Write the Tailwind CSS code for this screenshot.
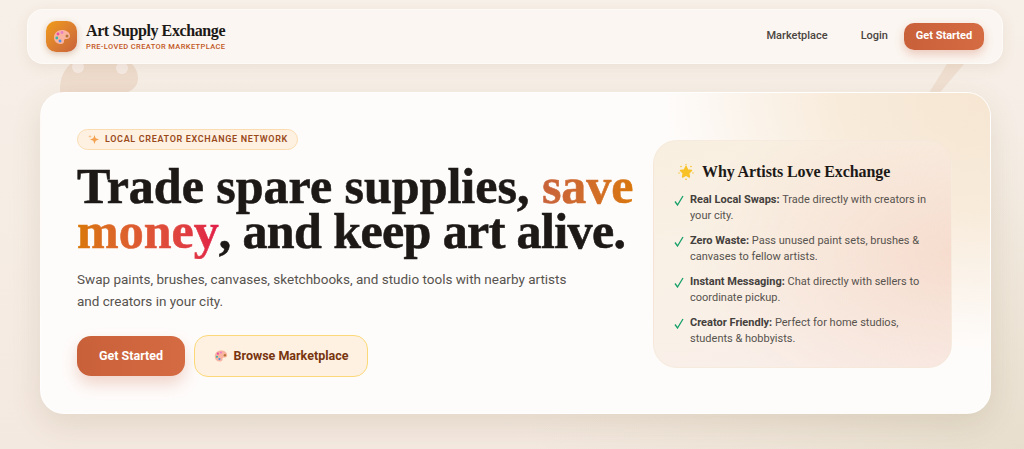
<!DOCTYPE html>
<html lang="en">
<head>
    <meta charset="UTF-8">
    <meta name="viewport" content="width=device-width, initial-scale=1.0">
    <title>Art Supply Exchange</title>
    <script src="https://cdn.jsdelivr.net/npm/@tailwindcss/browser@4"></script>
</head>
<body class="relative h-[449px] overflow-hidden bg-[radial-gradient(ellipse_500px_320px_at_100%_100%,rgba(226,218,198,0.7),transparent),linear-gradient(180deg,#f7f0e8,#f4e9e0)] font-['Roboto',sans-serif] text-[#1c1917]">
    <!-- background watermarks -->
    <svg class="absolute left-[58px] top-[50px]" width="84" height="60" viewBox="0 0 84 60" aria-hidden="true">
        <path d="M2 40C2 14 22 4 42 4s38 8 38 24c0 12-12 16-24 18-10 2-10 14-24 14C14 60 2 54 2 40Z" fill="#eedccd"/>
        <circle cx="20" cy="17" r="6" fill="#f6ece6"/>
        <circle cx="64" cy="18" r="6" fill="#f6ece6"/>
    </svg>
    <svg class="absolute left-[920px] top-[60px]" width="50" height="36" viewBox="0 0 50 36" aria-hidden="true">
        <path d="M27 4h17L17 36H7Z" fill="#f0e0d2"/>
    </svg>

    <header class="relative ml-[27px] mr-[21px] mt-[9px] flex h-[55px] items-center justify-between rounded-2xl border border-white/50 bg-[#fbf6f1] pl-[18px] pr-[18px] shadow-[0_4px_14px_rgba(150,100,60,0.10)]">
        <div class="flex items-center gap-[9px]">
            <div class="flex size-[31px] items-center justify-center rounded-[10px] bg-linear-to-br from-[#f09c12] to-[#c8623a] shadow-[0_2px_6px_rgba(150,80,30,0.3)]">
                <svg width="18" height="18" viewBox="0 0 18 18" aria-hidden="true">
                    <path d="M1 9.500C1 5 4.500 2 9 2s8 2.500 8 6c0 2.500-2.500 3-4.500 3-1.500 0-1.500 1.500-1.500 2.500S10 16 8 16C4 16 1 13.500 1 9.500Z" fill="#f9b3a0"/>
                    <circle cx="5" cy="6" r="1.400" fill="#e84fa0"/>
                    <circle cx="9" cy="4.500" r="1.400" fill="#e87fc8"/>
                    <circle cx="3.800" cy="10" r="1.400" fill="#35b5a5"/>
                    <circle cx="7" cy="13" r="1.400" fill="#4a90e8"/>
                    <circle cx="14" cy="8" r="1.500" fill="#b5763a"/>
                </svg>
            </div>
            <div>
                <div class="font-['Liberation_Serif',serif] text-[16px] font-bold leading-[20px] tracking-[-0.4px] text-[#1c1917]">Art Supply Exchange</div>
                <div class="text-[7.500px] font-medium leading-[11px] tracking-[0.05em] text-[#c2571f]">PRE-LOVED CREATOR MARKETPLACE</div>
            </div>
        </div>
        <nav class="flex items-center">
            <a class="mr-[33px] text-[11px] font-medium text-[#4a4440]" href="#">Marketplace</a>
            <a class="mr-[16px] text-[11px] font-medium text-[#4a4440]" href="#">Login</a>
            <a class="flex h-[27px] w-[80px] items-center justify-center rounded-[10px] bg-linear-to-r from-[#c8603a] to-[#d56b42] text-[11px] font-bold text-white shadow-[0_4px_10px_rgba(200,96,58,0.3)]" href="#">Get Started</a>
        </nav>
    </header>

    <main class="relative ml-[40px] mr-[33px] mt-[28px] flex h-[322px] justify-between rounded-3xl border border-white/80 bg-[#fefcfb] bg-[radial-gradient(ellipse_330px_260px_at_100%_0%,#f6e6d2_0%,#f8ebda_45%,#fefcfb_100%)] pl-[36px] pr-[38px] pt-[36px] shadow-[0_10px_30px_rgba(120,90,50,0.14)]">
        <section class="w-[570px]">
            <div class="flex h-[21px] w-[221px] items-center gap-[6px] rounded-full border border-[#fbdcb0] bg-[#fef1e2] pl-[10px]">
                <svg width="11" height="11" viewBox="0 0 11 11" aria-hidden="true">
                    <path d="M6.500 1 7.700 4.300 11 5.500 7.700 6.700 6.500 10 5.300 6.700 2 5.500 5.300 4.300Z" fill="#f5a04f"/>
                    <path d="M2 0.500 2.500 2 4 2.500 2.500 3 2 4.500 1.500 3 0 2.500 1.500 2Z" fill="#f9c58c"/>
                </svg>
                <span class="whitespace-nowrap text-[9px] font-semibold tracking-[0.074em] text-[#9a4a1a]">LOCAL CREATOR EXCHANGE NETWORK</span>
            </div>
            <h1 class="mt-[14px] font-['Liberation_Serif',serif] text-[50px] font-bold leading-[45px] text-[#1c1917] [-webkit-text-stroke:0.6px_#1c1917]">
                Trade spare supplies, <span class="bg-linear-to-r from-[#c8623a] via-[#d97706] via-40% to-[#e11d48] bg-clip-text text-transparent [-webkit-text-stroke:0.6px_transparent]">save money</span><span class="tracking-[-0.6px]">, and keep art alive.</span>
            </h1>
            <p class="mt-[14px] text-[13.500px] leading-[22px] text-[#57534e]">Swap paints, brushes, canvases, sketchbooks, and studio tools with nearby artists<br>and creators in your city.</p>
            <div class="mt-[23px] flex items-center gap-[9px]">
                <a class="flex h-[40px] w-[108px] items-center justify-center rounded-[14px] bg-linear-to-r from-[#c8603a] to-[#d56b42] text-[12.500px] font-bold text-white shadow-[0_8px_16px_rgba(200,96,58,0.25)]" href="#">Get Started</a>
                <a class="flex h-[42px] w-[174px] items-center justify-center gap-[6px] rounded-[14px] border border-[#fcd978] bg-[#fef1e2] text-[12.500px] font-bold text-[#78350f]" href="#">
                    <svg width="14" height="14" viewBox="0 0 18 18" aria-hidden="true">
                        <path d="M1 9.500C1 5 4.500 2 9 2s8 2.500 8 6c0 2.500-2.500 3-4.500 3-1.500 0-1.500 1.500-1.500 2.500S10 16 8 16C4 16 1 13.500 1 9.500Z" fill="#f9b3a0"/>
                        <circle cx="5" cy="6" r="1.400" fill="#e84fa0"/>
                        <circle cx="9" cy="4.500" r="1.400" fill="#e87fc8"/>
                        <circle cx="3.800" cy="10" r="1.400" fill="#35b5a5"/>
                        <circle cx="7" cy="13" r="1.400" fill="#4a90e8"/>
                        <circle cx="14" cy="8" r="1.500" fill="#b5763a"/>
                    </svg>
                    Browse Marketplace
                </a>
            </div>
        </section>

        <aside class="mt-[11px] h-[228px] w-[299px] rounded-3xl border border-[#f5e7d8]/60 bg-[radial-gradient(ellipse_260px_170px_at_100%_50%,rgba(245,214,198,0.75),transparent),linear-gradient(165deg,#f8efe0,#f9f1e6_45%,#f9eeea)] pl-[20px] pr-[24px] pt-[21px]">
            <div class="flex items-center gap-[8px] pl-[4px]">
                <svg width="16" height="16" viewBox="0 0 16 16" aria-hidden="true">
                    <path d="M8 2.500 9.700 6 13.500 6.500 10.700 9.200 11.400 13 8 11.200 4.600 13 5.300 9.200 2.500 6.500 6.300 6Z" fill="#f8c125" stroke="#f8c125" stroke-width="1.500" stroke-linejoin="round"/>
                    <g fill="#f8c125"><circle cx="3" cy="2.500" r=".8"/><circle cx="13" cy="2.500" r=".8"/><circle cx="8" cy="15.300" r=".8"/><circle cx="8" cy=".8" r=".7"/><circle cx="1" cy="9" r=".7"/><circle cx="15" cy="9" r=".7"/></g>
                </svg>
                <h2 class="font-['Liberation_Serif',serif] text-[16px] font-bold leading-[20px] tracking-[-0.1px] text-[#1c1917]">Why Artists Love Exchange</h2>
            </div>
            <ul class="mt-[10px] space-y-[10px] text-[11px] leading-[15.500px] text-[#57534e]">
                <li class="flex gap-[6px]">
                    <svg class="mt-[3px] shrink-0" width="10" height="11" viewBox="0 0 10 11" aria-hidden="true"><path d="M1 6.500 3.500 10 9 1" fill="none" stroke="#16a06a" stroke-width="1.300"/></svg>
                    <span><b class="font-bold text-[#44403c]">Real Local Swaps:</b> Trade directly with creators in your city.</span>
                </li>
                <li class="flex gap-[6px]">
                    <svg class="mt-[3px] shrink-0" width="10" height="11" viewBox="0 0 10 11" aria-hidden="true"><path d="M1 6.500 3.500 10 9 1" fill="none" stroke="#16a06a" stroke-width="1.300"/></svg>
                    <span><b class="font-bold text-[#44403c]">Zero Waste:</b> Pass unused paint sets, brushes &amp; canvases to fellow artists.</span>
                </li>
                <li class="flex gap-[6px]">
                    <svg class="mt-[3px] shrink-0" width="10" height="11" viewBox="0 0 10 11" aria-hidden="true"><path d="M1 6.500 3.500 10 9 1" fill="none" stroke="#16a06a" stroke-width="1.300"/></svg>
                    <span><b class="font-bold text-[#44403c]">Instant Messaging:</b> Chat directly with sellers to coordinate pickup.</span>
                </li>
                <li class="flex gap-[6px]">
                    <svg class="mt-[3px] shrink-0" width="10" height="11" viewBox="0 0 10 11" aria-hidden="true"><path d="M1 6.500 3.500 10 9 1" fill="none" stroke="#16a06a" stroke-width="1.300"/></svg>
                    <span><b class="font-bold text-[#44403c]">Creator Friendly:</b> Perfect for home studios, students &amp; hobbyists.</span>
                </li>
            </ul>
        </aside>
    </main>
</body>
</html>
